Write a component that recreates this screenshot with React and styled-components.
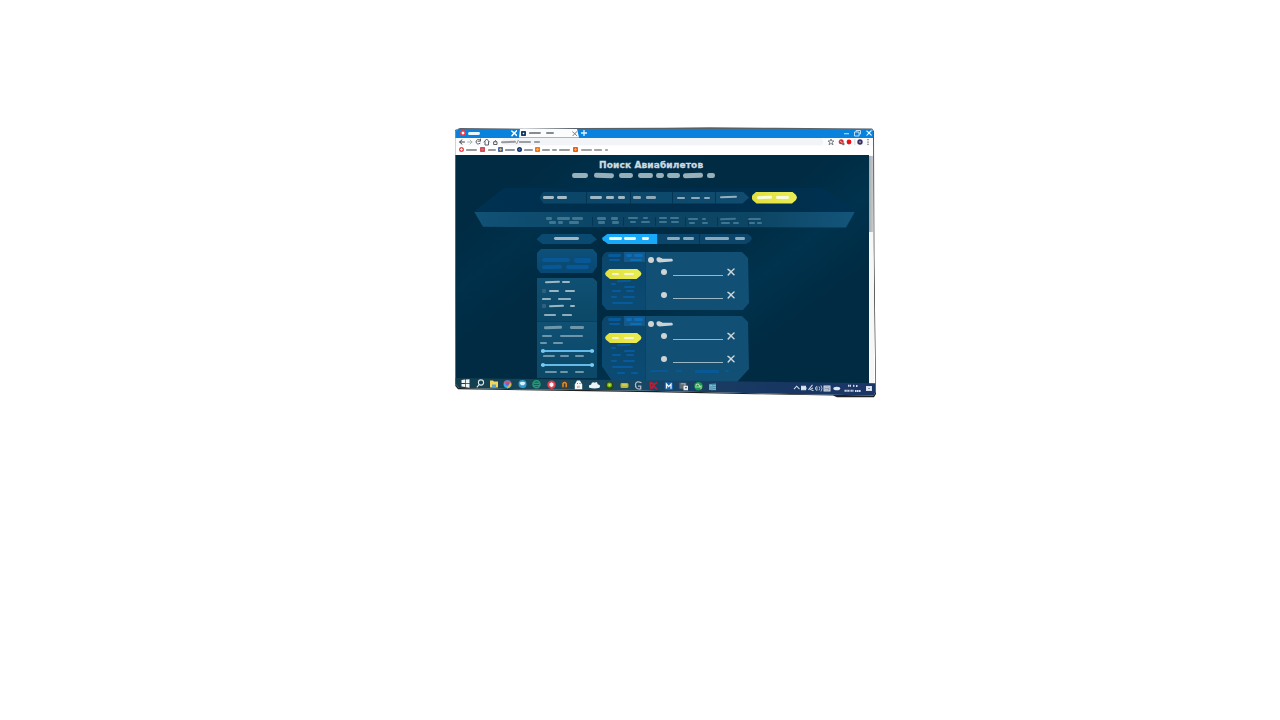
import React from "react";
import styled, { createGlobalStyle } from "styled-components";

const Global = createGlobalStyle`
  * { box-sizing: border-box; }
  body { margin: 0; background: #fff; overflow: hidden; font-family: "DejaVu Sans", sans-serif; }
`;

const Stage = styled.main`
  width: 1280px;
  height: 720px;
  padding: 127px 0 0 455px;
  background: #fff;
`;

const Frame = styled.div`
  width: 422px;
  height: 271px;
  background: linear-gradient(180deg, #59636b, #2b2c2e 20%, #1f2021);
  clip-path: polygon(0 3px, 5px 1px, 70px 1.8px, 120px 1.1px, 210px 0.8px, 255px 0.2px, 320px 0.8px, 417px 1.4px, 419px 4px, 419.4px 130px, 421px 267px, 419px 270.3px, 382px 270.3px, 378px 268.6px, 300px 267.2px, 200px 265.3px, 100px 263.8px, 3px 262.3px, 0.3px 259px);
`;

const Window = styled.div`
  display: flex;
  flex-direction: column;
  height: 271px;
  padding-top: 2px;
  background: #fff;
  clip-path: polygon(0.5px 4px, 3px 2px, 416px 2px, 418px 4px, 418.5px 120px, 420.5px 265px, 418.5px 268.5px, 300px 266.3px, 180px 263.6px, 60px 262.2px, 4px 261px, 0.5px 257px);
`;

const TabStrip = styled.div`
  display: flex;
  align-items: center;
  height: 8.5px;
  flex: none;
  color: #fff;
  background: #0882dc;
`;

const BrowserTab = styled.div`
  display: flex;
  align-items: center;
  width: ${(p) => p.$w}px;
  height: 100%;
  padding: 0 2px 0 ${(p) => p.$pad}px;
  background: ${(p) => (p.$active ? "#fbfcfd" : "transparent")};
  clip-path: ${(p) => (p.$active ? "polygon(1px 0, 58px 0, 60px 100%, 0 100%)" : "none")};
  & > svg:last-child { margin-left: auto; }
`;

const Buttons = styled.div`
  display: flex;
  align-items: center;
  gap: 4px;
  margin: 0 5.5px 0 auto;
`;

const AddressRow = styled.div`
  display: flex;
  align-items: center;
  height: 8.5px;
  flex: none;
  padding: 0 5px 0 4px;
  background: #fafbfd;
  & > svg { flex: none; }
`;

const Address = styled.div`
  display: flex;
  align-items: center;
  flex: 1;
  height: 7px;
  margin: 0 4px 0 3px;
  background: #f3f4f8;
  border-radius: 3px;
`;

const Bookmarks = styled.div`
  display: flex;
  align-items: center;
  height: 9px;
  flex: none;
  padding: 0 0 2px 4px;
  background: #fff;
`;

const Chip = styled.span`
  flex: none;
  display: block;
  width: ${(p) => p.$w || 5}px;
  height: ${(p) => p.$h || 5}px;
  margin-left: ${(p) => p.$gap || 0}px;
  border-radius: ${(p) => (p.$round ? "50%" : "0.8px")};
  background: radial-gradient(circle, ${(p) => p.$in || "#fff"} 0 ${(p) => p.$core || 0.9}px, ${(p) => p.$c} ${(p) => (p.$core || 0.9) + 0.5}px);
`;

const View = styled.div`
  display: flex;
  height: 228.5px;
  flex: none;
`;

const Page = styled.div`
  width: 414px;
  flex: none;
  overflow: hidden;
  background:
    linear-gradient(143deg, transparent 14%, rgba(0, 57, 89, 0.34) 25%, transparent 36%, transparent 52%, rgba(0, 58, 88, 0.5) 65%, transparent 78%),
    #002b43;
`;

const Scroll = styled.div`
  width: 5px;
  background: #f7f7f7;
  padding-top: 1px;
`;

const Thumb = styled.div`
  width: 4px;
  height: 76px;
  background: linear-gradient(90deg, #a6acb0, #c9cbcd);
`;

const Title = styled.h1`
  margin: 0;
  height: 17.5px;
  padding: 4.5px 0 0 144px;
  font: 900 9px/11px "DejaVu Sans", sans-serif;
  letter-spacing: 0.13px;
  white-space: nowrap;
  color: #cddbe0;
  -webkit-text-stroke: 0.3px #cddbe0;
`;

const Row = styled.div`
  display: flex;
  align-items: center;
  height: ${(p) => p.$h}px;
  flex: none;
`;

const Dash = styled.span`
  flex: none;
  display: block;
  width: ${(p) => p.$w}px;
  height: ${(p) => p.$t}px;
  margin-left: ${(p) => p.$gap}px;
  background: ${(p) => p.$c};
  border-radius: ${(p) => p.$t / 2}px;
  transform: rotate(${(p) => p.$r}deg);
`;

const SearchPanel = styled.section`
  width: 381px;
  height: 23.5px;
  margin: 10px 0 0 19px;
  padding: 3.5px 0 0 65.5px;
  display: flex;
  gap: 2.5px;
  background: linear-gradient(90deg, #003150, #002d4c 60%, #003150);
  clip-path: polygon(30px 0, 350px 0, 100% 100%, 0 100%);
`;

const SearchFields = styled.div`
  display: flex;
  width: 209.5px;
  height: 12px;
  background: linear-gradient(90deg, #0a4567, #104c6f);
  clip-path: polygon(4px 0, 203px 0, 100% 50%, 203px 100%, 4px 100%, 0 50%);
`;

const Cell = styled.div`
  display: flex;
  align-items: center;
  width: ${(p) => p.$w}px;
  flex: none;
  border-right: ${(p) => (p.$last ? 0 : "1px solid rgba(0, 43, 70, 0.65)")};
`;

const Yellow = styled.div`
  display: flex;
  align-items: center;
  width: ${(p) => p.$w}px;
  height: ${(p) => p.$h}px;
  margin-left: ${(p) => p.$gap || 0}px;
  flex: none;
  background: linear-gradient(90deg, #e1e03d, #e9ed55);
  clip-path: polygon(5px 0, calc(100% - 5px) 0, calc(100% - 1px) 30%, 100% 50%, calc(100% - 1px) 70%, calc(100% - 5px) 100%, 5px 100%, 1px 70%, 0 50%, 1px 30%);
`;

const Strip = styled.section`
  display: flex;
  width: 381px;
  height: 16px;
  margin-left: 19px;
  padding: 5px 0 0 71px;
  background: linear-gradient(90deg, #115276, #0b4464 35%, #0d4665 75%, #14557b);
  clip-path: polygon(0 0, 100% 0, 372px 100%, 9px 96%);
`;

const StripCell = styled.div`
  width: ${(p) => p.$w}px;
  height: 9px;
  flex: none;
  border-left: ${(p) => (p.$first ? 0 : "1px solid rgba(0, 44, 70, 0.6)")};
`;

const Tabs = styled.nav`
  display: flex;
  gap: 5px;
  height: 10.5px;
  margin: 6px 0 0 81.5px;
`;

const FilterHead = styled.div`
  display: flex;
  align-items: center;
  width: 60.5px;
  background: #0b4a70;
  clip-path: polygon(6px 0, 54px 0, 100% 55%, 54px 100%, 6px 100%, 0 55%);
`;

const SortTabs = styled.div`
  display: flex;
  width: 150px;
  background: #0b4569;
  clip-path: polygon(6px 0, 145px 0, 149px 3px, 150px 50%, 148px 8px, 144px 100%, 6px 100%, 1px 65%, 0 50%, 1px 35%);
`;

const SortTab = styled(Cell)`
  background: ${(p) => (p.$active ? "#18aaf9" : "transparent")};
`;

const Columns = styled.div`
  display: flex;
  gap: 5px;
  margin: 4.5px 0 0 81.5px;
`;

const Side = styled.aside`
  width: 60.5px;
  flex: none;
`;

const Promo = styled.div`
  height: 24.5px;
  padding-top: 8px;
  background: linear-gradient(180deg, #0d5078, #084873);
  clip-path: polygon(5px 0, 56px 0, 100% 5px, 100% 18px, 56px 100%, 4px 100%, 0 19px, 0 5px);
`;

const Filters = styled.div`
  height: ${(p) => p.$h}px;
  margin-top: ${(p) => p.$top || 0}px;
  padding-top: ${(p) => p.$pad}px;
  background: linear-gradient(180deg, #0f5073, #0c4867);
  clip-path: ${(p) => (p.$cut ? "polygon(1px 0, 56px 0, 100% 4px, 100% 100%, 0 100%, 0 1px)" : "none")};
  border-bottom: ${(p) => (p.$cut ? "1px solid #0a3f5f" : 0)};
`;

const Results = styled.section`
  display: flex;
  flex-direction: column;
  gap: 6px;
  padding-top: 3.5px;
`;

const Card = styled.article`
  display: flex;
  width: 147px;
  height: ${(p) => (p.$long ? 66 : 58)}px;
  background: #114f74;
  clip-path: ${(p) =>
    p.$long
      ? "polygon(5px 0, 140px 0, 146px 6px, 147px 53px, 135px 100%, 11px 100%, 0 50px, 0 6px, 2px 2px)"
      : "polygon(5px 0, 140px 0, 146px 6px, 147px 51px, 141px 100%, 5px 100%, 0 52px, 0 6px, 2px 2px)"};
`;

const Fare = styled.div`
  width: 44px;
  flex: none;
  background: linear-gradient(180deg, #0c456a, #0b4b73);
  border-right: 1px solid #0b4365;
`;

const FareHead = styled.div`
  display: flex;
  height: 10px;
  margin-bottom: 6.5px;
`;

const FareTab = styled.div`
  width: ${(p) => p.$w}px;
  padding-top: 1px;
  background: ${(p) => (p.$on ? "#17588a" : "transparent")};
`;

const Flight = styled.div`
  flex: 1;
  padding-top: 4px;
`;

const Legs = styled.div`
  display: flex;
  flex-direction: column;
  gap: 13px;
  padding-top: 3.5px;
`;

const Dot = styled.span`
  flex: none;
  width: 6px;
  height: 6px;
  margin-left: ${(p) => p.$gap}px;
  border-radius: 50%;
  background: #ced3d5;
`;

const Route = styled.span`
  flex: none;
  width: 49.5px;
  height: 1.2px;
  margin: ${(p) => p.$drop}px 4px 0 6px;
  background: #9cb6c4;
`;

const Range = styled.div`
  display: flex;
  align-items: center;
  justify-content: space-between;
  width: 53px;
  height: 4px;
  margin: ${(p) => p.$m || "0"} 0 0 4px;
  background: linear-gradient(#64bbe9, #64bbe9) center / 100% 2px no-repeat;
`;

const Knob = styled.i`
  width: 4px;
  height: 4px;
  border-radius: 50%;
  background: #78c9f0;
`;

const Taskbar = styled.footer`
  display: flex;
  height: 20px;
  flex: none;
  margin-top: -5.5px;
  padding: 1px 3px 0 6px;
  background: linear-gradient(90deg, #133d4c, #18475a 22%, #174765 45%, #193b61 62%, #173663 80%, #1b3768);
  transform: skewY(0.7deg);
  transform-origin: 0 0;
`;

const TaskIcon = styled.svg`
  width: 9px;
  height: 9px;
  flex: none;
  margin-right: ${(p) => p.$gap}px;
  overflow: visible;
`;

const Tray = styled.div`
  display: flex;
  align-items: center;
  height: 9px;
  margin: 0 1px 0 auto;
  & > svg { overflow: visible; }
`;

/* marks: alternating gap and width values, read from left to right */
function Marks({ marks, h = 4, t = 2, c = "#a8bdc8" }) {
  const v = marks.split(" ").map(Number);
  const items = [];
  for (let i = 0; i < v.length; i += 2) {
    items.push(<Dash key={i} $gap={v[i]} $w={v[i + 1]} $t={t} $c={c} $r={v[i + 1] > 20 ? 0 : i % 4 ? 1 : -1.2} />);
  }
  return <Row $h={h}>{items}</Row>;
}

function Cross({ size = 8, color = "#cbd4d8", w = 1.5 }) {
  return (
    <svg width={size} height={size} viewBox="0 0 8 8" fill="none" stroke={color} strokeWidth={w} strokeLinecap="round">
      <path d="M1 1.3Q3 2.5 7 6.8M7 1Q4 3.5 1.2 7" />
    </svg>
  );
}

function FlightLine({ drop }) {
  return (
    <Row $h={10.5}>
      <Dot $gap={15} />
      <Route $drop={drop} />
      <Cross />
    </Row>
  );
}

function Ticket({ long }) {
  const blue = "#075b9d";
  return (
    <Card $long={long}>
      <Fare>
        <FareHead>
          <FareTab $w={22}>
            <Marks marks="6 13" h={5} t={3.2} c={blue} />
            <Marks marks="7 11" h={3.5} t={2} c={blue} />
          </FareTab>
          <FareTab $w={21} $on>
            <Marks marks="2 6 2 9" h={5} t={3.2} c="#0a6fb8" />
            <Marks marks="6 12" h={3.5} t={2} c="#0a6fb8" />
          </FareTab>
        </FareHead>
        <Yellow $w={36.5} $h={10.5} $gap={3}>
          <Marks marks="6.5 7 5.5 10" h={9} t={2.4} c="#f3f4cb" />
        </Yellow>
        <Marks marks="15 14" h={4} t={2} c={blue} />
        <Marks marks="9 5" h={2.5} t={2} c={blue} />
        <Marks marks="22 11" h={3} t={2.4} c={blue} />
        <Marks marks="10 9 5 8" h={5.5} t={2.4} c={blue} />
        <Marks marks="9 6 6 12" h={6} t={2.4} c={blue} />
        <Marks marks="10 21" h={6.5} t={2.4} c={blue} />
        {long && <Marks marks="15 8 6 7" h={6} t={2.2} c={blue} />}
      </Fare>
      <Flight>
        <Row $h={7}>
          <Dot $gap={2} />
          <svg width="20" height="7" viewBox="0 0 20 7">
            <path d="M2.5 2.5C3.5.5 6 1 8.5 2.7L18 2.7Q20 4.7 17.5 5.6L5 6.4Q2 5.5 2.5 2.5Z" fill="#ccd1d3" />
          </svg>
        </Row>
        <Legs>
          <FlightLine drop={7} />
          <FlightLine drop={6} />
        </Legs>
        {long && <Marks marks="4 18 8 6 13 24 6 4" h={14} t={2.2} c="#075a97" />}
      </Flight>
    </Card>
  );
}

const taskIcons = [
  [5.8, <path key="a" d="M.5 1l3.5-.5V4H.5zM4.7.4L8.5 0v4H4.7zM.5 4.8H4v3L.5 7.3zM4.7 4.8h3.8v3.7l-3.8-.5z" fill="#f0f5f6" />],
  [4, <g key="a" fill="none" stroke="#dbe6ea" strokeWidth="1.1"><circle cx="5" cy="3.2" r="2.6" /><path d="M3.2 5.2L.8 8" /></g>],
  [5, <g key="a"><path d="M1 1h3l1 1h4v6H1z" fill="#f6d55c" /><path d="M3 5h4v3H3z" fill="#57a7d4" /></g>],
  [5.8, <g key="a"><circle cx="4.5" cy="4.5" r="4" fill="#37a8e1" /><path d="M1 3a4 4 0 0 1 7 0L4.5 5z" fill="#d65375" /><path d="M8 3a4 4 0 0 1-4 5.5L5 5z" fill="#d5b43c" /><circle cx="4.5" cy="4.4" r="1.6" fill="#6a65ca" /></g>],
  [5.8, <g key="a"><circle cx="4.5" cy="4.3" r="4" fill="#2c9ad0" /><path d="M1.5 3q3-2 6 0L6 5.5H3z" fill="#def2f8" /></g>],
  [5.5, <g key="a" stroke="#19a26a" fill="none" strokeWidth="1.5"><circle cx="4.5" cy="4.3" r="3.5" /><path d="M2 3.2h5M2 5.5h5" /></g>],
  [4.3, <g key="a"><circle cx="4.5" cy="4.5" r="4.2" fill="#d74350" /><path d="M4.5 2l2 1.4v2.2l-2 1.5-2-1.5V3.4z" fill="#fff" /></g>],
  [5, <g key="a"><rect x="1" y=".3" width="7.5" height="8" rx="1" fill="#493b36" /><path d="M3 7V3.2Q4.7 1 6.2 3.2V7" fill="none" stroke="#e08f1c" strokeWidth="1.5" /></g>],
  [7.3, <g key="a"><path d="M.8 4L3 0h3l2.2 4v4.8H.8z" fill="#f6f8fa" /><path d="M3 3h1M5.5 3h1M3 6.5h1" stroke="#6677b5" /><path d="M5 5.2v2" stroke="#cb8b5e" /></g>],
  [5.3, <path key="a" d="M-.7 7Q-2 4 1 4Q2 .5 5 2Q7-.1 7.7 3.6Q11 4 9.5 7Q4 8.5-.7 7Z" fill="#eff4f8" />],
  [5.8, <g key="a"><circle cx="4.5" cy="4.5" r="4" fill="#294519" /><circle cx="4.5" cy="4.2" r="2.5" fill="#78bd15" /><circle cx="4.5" cy="4" r="1" fill="#e0e94c" /></g>],
  [5.2, <g key="a"><rect x=".5" y="2" width="8" height="5" rx="1.5" fill="#b7b73a" /><path d="M2 4h5" stroke="#e3db6a" /></g>],
  [6, <path key="a" d="M7.5 1.5Q2.3-.8 1.5 3Q1 8.5 6.7 7.7V4.8H4" fill="none" stroke="#aebcc9" strokeWidth="1.3" />],
  [6, <g key="a" fill="none" stroke="#b61f35" strokeWidth="1.7"><path d="M1 1l1 6q3-1 2-5L1 1M8 1L4 4l4 4" /></g>],
  [6.5, <g key="a"><rect x=".8" y=".8" width="8" height="7.5" rx=".8" fill="#1765b5" /><path d="M2.5 7V2.5L4.7 5 7 2.5V7" stroke="#eef6ff" strokeWidth="1.3" fill="none" /></g>],
  [6, <g key="a"><rect x=".4" y="1" width="7" height="6" fill="#626d73" /><path d="M2 2h4v4" stroke="#a6abb0" fill="none" /><rect x="4.5" y="4" width="4.5" height="4.5" fill="#e8e9eb" /><path d="M6 6h2" stroke="#414b59" /></g>],
  [4.4, <g key="a"><circle cx="4.5" cy="4.3" r="4.2" fill="#1c9a4c" /><path d="M2 6V3q2-2 3 0t2 1v3M3 5h3" stroke="#b3e4b5" fill="none" /></g>],
  [0, <g key="a"><path d="M1 2l7-1v7H1z" fill="#387e9b" /><path d="M2 8V3h2v5M5 3h3M5 5h3M5 7h3" stroke="#86cbd8" fill="none" /></g>],
];

export default function App() {
  const dim = "#3f7591";
  const side = "#6e96aa";
  return (
    <Stage>
      <Global />
      <Frame>
        <Window>
          <TabStrip>
            <BrowserTab $w={64} $pad={5}>
              <Chip $round $c="#ef3942" $w={6} $h={6} $core={1.2} />
              <Marks marks="2 12" h={6} t={3} c="#eaf7ff" />
              <Cross size={6.5} color="#fff" w={1.9} />
            </BrowserTab>
            <BrowserTab $w={60} $pad={2} $active>
              <Chip $c="#173b66" $w={5} $h={5} $core={0.6} />
              <Marks marks="3 12 5 8" h={6} t={2} c="#858b91" />
              <Cross size={5.5} color="#515c65" w={1.1} />
            </BrowserTab>
            <svg width="10" height="8" viewBox="0 0 10 8"><path d="M5 1v6M2 4h6" stroke="#dff3ff" strokeWidth="1.3" /></svg>
            <Buttons>
              <svg width="18" height="8" viewBox="0 0 18 8" fill="none" stroke="#cde9fb">
                <path d="M0 4.7h5" strokeWidth="1.1" />
                <path d="M10.5 3H15v4h-4.5zM12 3V1.5h4.5V5H15" strokeWidth=".9" />
              </svg>
              <Cross size={6} color="#ecf7ff" w={1.4} />
            </Buttons>
          </TabStrip>
          <AddressRow>
            <svg width="40" height="8" viewBox="0 0 40 8" fill="none" stroke="#5b6167" strokeWidth="1" strokeLinecap="round">
              <path d="M5.5 4H.8M3 1.8L.6 4 3 6.2" stroke="#3c4248" />
              <path d="M8.5 4H13M11 2l2 2-2 2" stroke="#afb3b8" />
              <path d="M21 2Q17.7.2 17 4Q18 7.3 21 5.3M19 3.2h2.5V1" />
              <path d="M25 4l2.7-3 2.7 3M26 3.7V7h3.5V3.7" />
              <path d="M35 3.8h3v2.7h-3zM35.5 3.5q1-2.5 2 0" />
            </svg>
            <Address>
              <Marks marks="-1 15" h={4} t={2} c="#969a9e" />
              <svg width="3" height="6"><path d="M.5 5L2.5 1" stroke="#8e9498" /></svg>
              <Marks marks="0 12 3 6" h={4} t={1.5} c="#999fa3" />
            </Address>
            <svg width="45" height="8" viewBox="0 0 45 8">
              <path d="M4 1l.8 2H7L5.2 4.3 6 6.8 4 5.4 2 6.8l.8-2.5L1 3h2.2z" fill="none" stroke="#626b75" strokeWidth=".8" />
              <circle cx="14.2" cy="3.7" r="2.5" fill="#c93238" /><path d="M12.7 2.7l3 2.5" stroke="#f7d1d1" strokeWidth=".8" />
              <circle cx="16.3" cy="6" r="1.3" fill="#717277" />
              <circle cx="22" cy="4" r="2.4" fill="#ef0f14" />
              <path d="M27.8 1v6" stroke="#c8cbd0" strokeWidth=".7" />
              <circle cx="33" cy="4" r="2.7" fill="#35306c" /><circle cx="33" cy="4" r="1.1" fill="#9f8c8b" />
              <path d="M41 1v1.3M41 3.4v1.3M41 5.8v1.3" stroke="#60666c" strokeWidth="1.2" />
            </svg>
          </AddressRow>
          <Bookmarks>
            <Chip $round $c="#e44c50" /><Marks marks="1.5 11" t={1.9} c="#97999d" />
            <Chip $gap={3.7} $c="#ce4c58" $in="#dd6a71" /><Marks marks="2.8 8" t={1.9} c="#999ba0" />
            <Chip $gap={2.3} $c="#496bac" $in="#d2b75d" /><Marks marks="1.7 10" t={1.9} c="#8f949d" />
            <Chip $round $gap={2.3} $c="#14346e" $in="#496895" /><Marks marks="1.7 9" t={1.9} c="#929aa8" />
            <Chip $gap={2.2} $c="#ec7715" $in="#f6b774" /><Marks marks="1.7 8 2 5 2 11" t={1.9} c="#999da2" />
            <Chip $gap={3.6} $c="#e86015" $in="#f2aa74" /><Marks marks="2.5 11 2.5 8 3 3" t={1.7} c="#a0a4a9" />
          </Bookmarks>
          <View>
            <Page>
              <Title>Поиск Авиабилетов</Title>
              <Marks marks="117 16 6 20 5 14 5 15 3 8 3 13 2.5 20 4 8" h={5.5} t={4.6} c="#98aeb8" />
              <SearchPanel>
                <SearchFields>
                  <Cell $w={47}><Marks marks="3 11 3 10" h={12} t={2.6} c="#a5bcc7" /></Cell>
                  <Cell $w={44.5}><Marks marks="3 12 4 8 4 7" h={12} t={2.6} c="#a0b8c5" /></Cell>
                  <Cell $w={42}><Marks marks="2 8 5 10" h={12} t={2.5} c="#8aa8b9" /></Cell>
                  <Cell $w={43}><Marks marks="4 8 6 9 4 6" h={12} t={2} c="#8daabb" /></Cell>
                  <Cell $w={33} $last><Marks marks="4 17" h={12} t={2.4} c="#94afbd" /></Cell>
                </SearchFields>
                <Yellow $w={45.5} $h={12}><Marks marks="5 15 4 13" h={11} t={2.6} c="#fafbdc" /></Yellow>
              </SearchPanel>
              <Strip>
                <StripCell $w={47} $first><Marks marks="1 6 5 13 2 11" t={2.5} c={dim} /><Marks marks="4 7 2 5 6 10" t={2.5} c={dim} /></StripCell>
                <StripCell $w={31}><Marks marks="4 9 5 7" t={2.5} c={dim} /><Marks marks="5 7 7 7" t={2.5} c={dim} /></StripCell>
                <StripCell $w={31.5}><Marks marks="4 10 5 5" t={2.4} c={dim} /><Marks marks="6 6 5 9" t={2.4} c={dim} /></StripCell>
                <StripCell $w={30.5}><Marks marks="3 8 3 9" t={2.2} c={dim} /><Marks marks="3 8 4 8" t={2.2} c={dim} /></StripCell>
                <StripCell $w={32}><Marks marks="2 10 4 4" t={2} c={dim} /><Marks marks="3 6 7 6" t={2} c={dim} /></StripCell>
                <StripCell $w={31}><Marks marks="2 16" t={2} c={dim} /><Marks marks="3 9 3 6" t={2} c={dim} /></StripCell>
                <StripCell $w={20}><Marks marks="-1 13" t={2} c={dim} /><Marks marks="0 6 2 5" t={2} c={dim} /></StripCell>
              </Strip>
              <Tabs>
                <FilterHead><Marks marks="17 25" h={10} t={2.9} c="#a0b6c1" /></FilterHead>
                <SortTabs>
                  <SortTab $w={55.5} $active><Marks marks="7 13 2 12 5.5 7" h={10} t={2.8} c="#ebf8ff" /></SortTab>
                  <SortTab $w={42}><Marks marks="9.5 13 3 11" h={10} t={2.6} c="#8ba9ba" /></SortTab>
                  <SortTab $w={52} $last><Marks marks="5 24 6 10" h={10} t={2.6} c="#8ba9ba" /></SortTab>
                </SortTabs>
              </Tabs>
              <Columns>
                <Side>
                  <Promo>
                    <Marks marks="5 28 4 17" h={7} t={4.5} c="#075894" />
                    <Marks marks="5 20 4 23" h={7} t={3.8} c="#075894" />
                  </Promo>
                  <Filters $h={44.5} $top={4.5} $pad={2.5} $cut>
                    <Marks marks="8 15 2 8" h={4.5} t={2.3} c="#9eb7c3" />
                    <Row $h={12}><Chip $gap={5} $w={4} $h={4} $c="#315f7d" $in="#315f7d" /><Marks marks="3 10 6 10" t={2} c="#9bb5c2" /></Row>
                    <Marks marks="5 9 7 13" h={4} t={1.8} c="#91b0bf" />
                    <Row $h={11}><Chip $gap={5} $w={4} $h={4} $c="#315f7d" $in="#315f7d" /><Marks marks="3 15 6 5" t={2.1} c="#9bb5c2" /></Row>
                    <Marks marks="7 12 6 10" h={6} t={1.7} c="#8dadbe" />
                  </Filters>
                  <Filters $h={56} $pad={2.5}>
                    <Marks marks="7 18 8 14" h={5} t={2.5} c={side} />
                    <Marks marks="5 10 8 23" h={13.5} t={2.3} c={side} />
                    <Marks marks="3 7 6 10" h={0} t={2.2} c={side} />
                    <Range $m="5.5px"><Knob /><Knob /></Range>
                    <Marks marks="6 12 5 9 6 9" h={8} t={2.4} c={side} />
                    <Range $m="2px"><Knob /><Knob /></Range>
                    <Marks marks="8 12 3 8 7 9" h={11} t={2.4} c={side} />
                  </Filters>
                </Side>
                <Results>
                  <Ticket />
                  <Ticket long />
                </Results>
              </Columns>
            </Page>
            <Scroll><Thumb /></Scroll>
          </View>
          <Taskbar>
            {taskIcons.map(([gap, art], i) => (
              <TaskIcon key={i} $gap={gap} viewBox="0 0 9 9">{art}</TaskIcon>
            ))}
            <Tray>
              <svg width="80" height="9" viewBox="0 0 80 9" fill="none" stroke="#d5dfec" strokeWidth="1">
                <path d="M1 6l2.7-3L6.5 6" />
                <path d="M8.5 3h4v3.5h-4zM13 4v2" fill="#dce5ef" />
                <path d="M15.5 6.5l4-5M17 6.5l3-2M18.5 7h2" />
                <path d="M22.5 4v2l1.5 1V3zM26 3q1.5 2 0 4M28 2q2 3 0 6" strokeWidth=".8" />
                <rect x="31" y="2.5" width="6" height="5" fill="#8997ac" /><path d="M32 4h4M32 6h3" strokeWidth=".6" />
                <ellipse cx="43.8" cy="4.8" rx="3.5" ry="1.8" fill="#dee5ef" stroke="none" />
                <path d="M55 2h3M60 2h1.5M63 2h2" strokeWidth="2" strokeDasharray="1.4 .5" />
                <path d="M51.5 7h5M57.5 7h3M62 7h6" strokeWidth="2" strokeDasharray="1.4 .4" />
                <path d="M73.5 2.5h5v4h-5z" fill="#e4eaf2" /><path d="M75 4.4h2" stroke="#5b6c8f" strokeWidth=".7" />
              </svg>
            </Tray>
          </Taskbar>
        </Window>
      </Frame>
    </Stage>
  );
}
